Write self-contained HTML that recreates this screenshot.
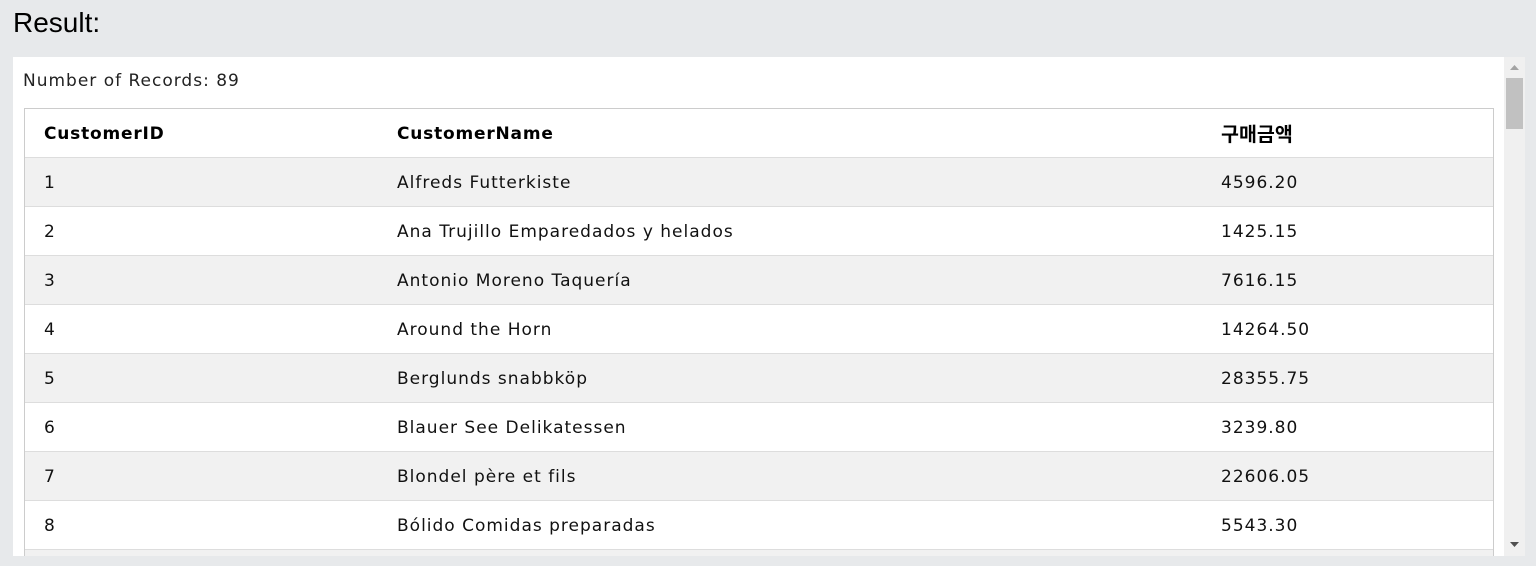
<!DOCTYPE html>
<html><head><meta charset="utf-8"><style>
html,body{margin:0;width:1536px;height:566px;overflow:hidden}
body{background:#e7e9eb;position:relative;font-family:"DejaVu Sans","Liberation Sans","Noto Sans CJK KR",sans-serif;color:#000}
.title{position:absolute;left:13px;top:6px;font-family:"Liberation Sans",sans-serif;font-size:28px;line-height:34px;color:#000}
.panel{position:absolute;left:13px;top:57px;width:1491px;height:499px;background:#fff;overflow:hidden}
.num{position:absolute;left:10px;top:14px;font-size:17px;letter-spacing:1px;color:#222}
.tbl{position:absolute;left:11px;top:51px;width:1468px;border:1px solid #ccc;border-bottom:none}
.row{height:48px;border-bottom:1px solid #ddd;position:relative;font-size:17px;letter-spacing:1px;color:#111}
.row span{position:absolute;top:15px;white-space:nowrap}
.c1{left:19px}.c2{left:372px}.c3{left:1196px}
.hd{font-weight:bold;color:#000;letter-spacing:0.8px}
.sb{position:absolute;left:1504px;top:57px;width:21px;height:499px;background:#f0f0f0}
.thumb{position:absolute;left:2px;top:21px;width:17px;height:51px;background:#c1c1c1}
</style></head><body>
<div class="title">Result:</div>
<div class="panel">
<div class="num">Number of Records: 89</div>
<div class="tbl">
<div class="row hd" style="background:#fff"><span class="c1">CustomerID</span><span class="c2">CustomerName</span><span class="c3" style="font-family:'Noto Sans CJK KR',sans-serif;font-size:19.5px;top:9px;letter-spacing:0">구매금액</span></div>
<div class="row" style="background:#f1f1f1"><span class="c1">1</span><span class="c2">Alfreds Futterkiste</span><span class="c3">4596.20</span></div>
<div class="row" style="background:#fff"><span class="c1">2</span><span class="c2">Ana Trujillo Emparedados y helados</span><span class="c3">1425.15</span></div>
<div class="row" style="background:#f1f1f1"><span class="c1">3</span><span class="c2">Antonio Moreno Taquería</span><span class="c3">7616.15</span></div>
<div class="row" style="background:#fff"><span class="c1">4</span><span class="c2">Around the Horn</span><span class="c3">14264.50</span></div>
<div class="row" style="background:#f1f1f1"><span class="c1">5</span><span class="c2">Berglunds snabbköp</span><span class="c3">28355.75</span></div>
<div class="row" style="background:#fff"><span class="c1">6</span><span class="c2">Blauer See Delikatessen</span><span class="c3">3239.80</span></div>
<div class="row" style="background:#f1f1f1"><span class="c1">7</span><span class="c2">Blondel père et fils</span><span class="c3">22606.05</span></div>
<div class="row" style="background:#fff"><span class="c1">8</span><span class="c2">Bólido Comidas preparadas</span><span class="c3">5543.30</span></div>
<div class="row" style="background:#f1f1f1"></div>
</div>
</div>
<div class="sb">
<svg style="position:absolute;left:6px;top:8px" width="9" height="5"><path d="M4.5 0L9 5H0z" fill="#a3a3a3"/></svg>
<div class="thumb"></div>
<svg style="position:absolute;left:6px;top:485px" width="9" height="5"><path d="M0 0H9L4.5 5z" fill="#505050"/></svg>
</div>
</body></html>
